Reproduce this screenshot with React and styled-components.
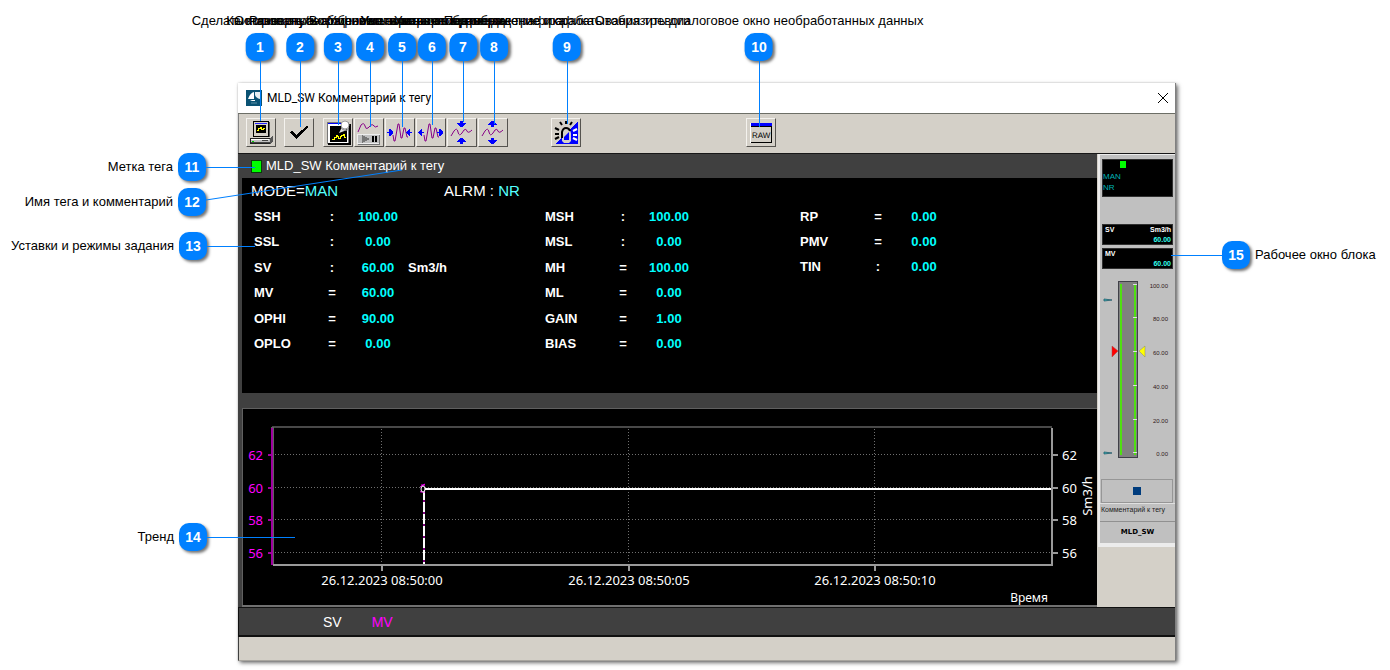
import React from 'react'
import styled, { createGlobalStyle, css } from 'styled-components'

const GlobalStyle = createGlobalStyle`
  *, *::before, *::after {
    box-sizing: border-box;
  }

  body {
    margin: 0;
    background: #fff;
    font-family: 'Liberation Sans', Arial, sans-serif;
  }
`

const Page = styled.main`
  position: relative;
  padding: 83px 214px 8px 238px;
  overflow: hidden;
`

/* ---------- window ---------- */

const Window = styled.section`
  background: #d4d0c8;
  border-right: 1px solid #808080;
  box-shadow: 2px 2px 4px rgba(0, 0, 0, 0.55), 0 0 2px rgba(0, 0, 0, 0.2);
`

const TitleBar = styled.header`
  display: flex;
  align-items: center;
  height: 31px;
  padding: 0 6px 0 8px;
  background: #fff;
  border-bottom: 1px solid #6c6e66;
`

const TitleText = styled.h1`
  flex: 1;
  margin: 0 0 0 5px;
  font: 12px/16px Roboto, 'Open Sans', sans-serif;
  color: #000;
`

const CloseButton = styled.button`
  display: flex;
  padding: 0;
  border: none;
  background: none;
`

const ToolBar = styled.div`
  display: flex;
  align-items: flex-start;
  height: 39px;
  padding: 4px 0 0 7px;
  border-left: 1px solid #808080;
`

const ToolGroup = styled.div`
  display: flex;
  gap: 1px;
  margin-right: ${({ $after }) => $after || 0}px;
`

const ToolButton = styled.button`
  width: 30px;
  height: 29px;
  padding: 0;
  background: #d4d0c8;
  border: 1px solid;
  border-color: #f4f2ee #55534f #55534f #f4f2ee;

  svg {
    display: block;
    margin: -1px;
  }
`

const Body = styled.div`
  display: flex;
  border-top: 1px solid #181818;
`

const Detail = styled.div`
  flex: 1;
  min-width: 0;
  padding-left: 4px;
  background: #404040;
`

const TagHeader = styled.div`
  display: flex;
  align-items: center;
  gap: 4px;
  height: 24px;
  padding-left: 9px;
  font-size: 13px;
  line-height: 20px;
  color: #fff;
`

const TagMark = styled.span`
  width: 11px;
  height: 13px;
  background: #0f0;
  border: 1px solid #0a3c0a;
`

const Params = styled.div`
  height: 215px;
  padding: 0 12px;
  background: #000;
  color: #fff;
`

const ModeRow = styled.div`
  display: flex;
  height: 26px;
  padding-left: 9px;
  margin-left: -12px;
  font-size: 15px;
  line-height: 25px;

  span {
    color: #55ffff;
  }
`

const ModeItem = styled.div`
  width: 193px;
  white-space: nowrap;
`

const ParamColumns = styled.div`
  display: flex;
  align-items: flex-start;
`

const ParamTable = styled.table`
  table-layout: fixed;
  width: ${({ $width }) => $width}px;
  height: ${({ $rows }) => ($rows > 3 ? 153 : 76)}px;
  border-collapse: collapse;
  font-size: 13px;
  line-height: 16px;
  font-weight: bold;

  th,
  td {
    padding: 0;
    text-align: center;
  }

  th {
    width: 62px;
    text-align: left;
  }
`

const Sign = styled.td`
  width: 32px;
`

const Value = styled.td`
  width: 60px;
  color: #0ff;
`

const Unit = styled.td`
  && {
    text-align: left;
  }
`

const Trend = styled.figure`
  margin: 15px 0 0;
  background: #000;

  svg {
    display: block;
    width: 100%;
    height: auto;
    font-family: 'Noto Sans', 'Open Sans', sans-serif;
    font-size: 13px;
  }
`

const Legend = styled.div`
  display: flex;
  gap: 30px;
  height: 30px;
  padding-left: 84px;
  background: #404040;
  border: solid #101010;
  border-width: 1px 0 2px 1px;
  font-size: 14px;
  line-height: 28px;
`

const LegendItem = styled.span`
  color: ${({ $color }) => $color};
`

const StatusBar = styled.footer`
  height: 24px;
  border-left: 1px solid #404040;
  border-bottom: 1px solid #a8a59f;
`

/* ---------- faceplate ---------- */

const Side = styled.aside`
  width: 78px;
  border-left: 1px solid #d4d0c8;
`

const Faceplate = styled.div`
  background: #c0c0c0;
  border: solid #ececec;
  border-width: 1px 0 4px 2px;
`

const black = css`
  margin: 0 2px;
  background: #000;
  border: 1px solid #303030;
`

const StateBox = styled.div`
  ${black}
  height: 38px;
  margin-bottom: 27px;
  font-size: 8px;
  line-height: 11px;
  color: #00b4b4;
`

const StateMark = styled.i`
  display: block;
  width: 6px;
  height: 7px;
  margin: 1px 0 3px 17px;
  background: #0f0;
`

const PlateTop = styled.div`
  padding-top: 4px;
`

const ReadOut = styled.div`
  ${black}
  height: 21px;
  margin-bottom: 3px;
  padding: 0 1px 0 2px;
  font-size: 7px;
  line-height: 10px;
  font-weight: bold;
  color: #fff;

  div {
    display: flex;
    justify-content: space-between;
  }

  output {
    display: block;
    text-align: right;
    color: #3fe;
  }
`

const Gauge = styled.svg`
  display: block;
  width: 74px;
  height: 196px;
  margin-top: 6px;
  font-size: 6px;
`

const PlateButton = styled.button`
  display: flex;
  align-items: center;
  justify-content: center;
  width: 72px;
  height: 24px;
  margin: 8px 0 0 1px;
  padding: 0;
  background: #c0c0c0;
  border: 1px solid #969696;
`

const PlateSquare = styled.i`
  width: 8px;
  height: 8px;
  background: #003c7d;
`

const PlateComment = styled.div`
  height: 19px;
  padding-left: 1px;
  border-top: 1px solid #e0e0e0;
  border-bottom: 1px solid #909090;
  font-size: 7px;
  line-height: 12px;
  color: #222;
  white-space: nowrap;
`

const PlateTag = styled.div`
  text-align: center;
  font: bold 7px/21px 'DejaVu Sans', sans-serif;
  color: #000;
`

/* ---------- callouts ---------- */

const Callout = styled.div`
  position: absolute;
  display: flex;
  align-items: center;
  gap: 5px;
  font-size: 13px;
  line-height: 16px;
  white-space: nowrap;
  color: #000;
  top: ${({ $y }) => $y}px;

  ${({ $side, $x }) =>
    $side === 'top' &&
    css`
      left: ${$x}px;
      flex-direction: column;
      gap: 4px;
      transform: translateX(-50%);
    `}

  ${({ $side, $x }) =>
    $side === 'left' &&
    css`
      left: 0;
      width: ${$x}px;
      justify-content: flex-end;
    `}

  ${({ $side }) =>
    $side === 'right' &&
    css`
      right: 0;
      width: 168px;
      flex-direction: row-reverse;
      justify-content: flex-end;
    `}
`

const Badge = styled.span`
  flex: none;
  width: 28px;
  height: 28px;
  border-radius: 10px;
  background: #0080ff;
  box-shadow: 2px 2px 3px rgba(0, 0, 0, 0.55);
  font-size: 14px;
  line-height: 28px;
  font-weight: bold;
  text-align: center;
  color: #fff;
`

const Leaders = styled.svg`
  position: absolute;
  inset: 0;
  width: 100%;
  height: 100%;
  pointer-events: none;
  stroke: #0080ff;
  stroke-width: 1;
`

/* ---------- data ---------- */

const topCallouts = [
  { n: 1, x: 260, end: 121, text: 'Сделать копию экрана' },
  { n: 2, x: 300, end: 127, text: 'Квитировать сообщение' },
  { n: 3, x: 338, end: 125, text: 'Развернуть график на экране' },
  { n: 4, x: 370, end: 127, text: 'Остановить/Возобновить построение тренда' },
  { n: 5, x: 402, end: 127, text: 'Уменьшить ось времени' },
  { n: 6, x: 432, end: 125, text: 'Увеличить ось времени' },
  { n: 7, x: 463, end: 122, text: 'Уменьшить отображение графика' },
  { n: 8, x: 494, end: 124, text: 'Увеличить отображение графика' },
  { n: 9, x: 567, end: 124, text: 'Подтверждение и срабатывания тревоги' },
  { n: 10, x: 759, end: 127, text: 'Отобразить диалоговое окно необработанных данных' }
]

const leftCallouts = [
  { n: 11, x: 206, y: 153, text: 'Метка тега' },
  { n: 12, x: 206, y: 188, text: 'Имя тега и комментарий' },
  { n: 13, x: 207, y: 232, text: 'Уставки и режимы задания' },
  { n: 14, x: 207, y: 523, text: 'Тренд' }
]

const paramGroups = [
  {
    width: 291,
    rows: [
      ['SSH', ':', '100.00'],
      ['SSL', ':', '0.00'],
      ['SV', ':', '60.00', 'Sm3/h'],
      ['MV', '=', '60.00'],
      ['OPHI', '=', '90.00'],
      ['OPLO', '=', '0.00']
    ]
  },
  {
    width: 255,
    rows: [
      ['MSH', ':', '100.00'],
      ['MSL', ':', '0.00'],
      ['MH', '=', '100.00'],
      ['ML', '=', '0.00'],
      ['GAIN', '=', '1.00'],
      ['BIAS', '=', '0.00']
    ]
  },
  {
    width: 200,
    rows: [
      ['RP', '=', '0.00'],
      ['PMV', '=', '0.00'],
      ['TIN', ':', '0.00']
    ]
  }
]

const trendLevels = [
  [62, 47],
  [60, 80],
  [58, 112],
  [56, 145]
]

const trendTimes = [
  ['26.12.2023 08:50:00', 140],
  ['26.12.2023 08:50:05', 387],
  ['26.12.2023 08:50:10', 633]
]

const gaugeMarks = [
  ['100.00', 10],
  ['80.00', 43],
  ['60.00', 77],
  ['40.00', 111],
  ['20.00', 145],
  ['0.00', 178]
]

/* ---------- icons ---------- */

const Icon = ({ children }) => (
  <svg width="30" height="29" viewBox="0 0 30 29" fill="none" shapeRendering="crispEdges" aria-hidden="true">
    {children}
  </svg>
)

const CopyIcon = () => (
  <Icon>
    <path d="M7.500 3.500h15v15h-15z" fill="#d4d0c8" stroke="#000" />
    <path d="M23 4h1v15h-1z" fill="#555" />
    <path d="M9 5h12" stroke="#22f" />
    <path d="M10 7h10v8H10z" fill="#000" />
    <path d="M11 12.500h1v-2h2v-1h1v2h2v-1h2" stroke="#ff0" />
    <path d="M4.500 20.500h20v5h-20z" fill="#c0c0c0" stroke="#222" />
    <path d="M24 20l3-2v6l-3 2z" fill="#555" />
    <path d="M5 21.500h18" stroke="#fff" />
    <path d="M5 24.500h19M16 22.500h6" stroke="#444" />
    <path d="M6 23h2" stroke="#0c0" />
  </Icon>
)

const CheckIcon = () => (
  <Icon>
    <path d="M6 14l2-1 4 4L23 8l1 1L12 21z" fill="#000" />
  </Icon>
)

const SaveTrendIcon = () => (
  <Icon>
    <path d="M4.500 4.500h21v21h-21z" fill="#fff" stroke="#777" />
    <path d="M5 26h22V6" stroke="#000" strokeWidth="2" />
    <path d="M5 5h14" stroke="#00f" />
    <path d="M7 8h17v16H7z" fill="#000" />
    <path d="M9 21.500h2v-2h2v-2h1v1h1v2h2v-2h1v-1h2v-1h1v3h2" stroke="#ff0" />
    <g shapeRendering="auto">
      <path d="M16 15l3-6 5 3z" fill="#ddd" />
      <circle cx="22" cy="7" r="4" fill="#fff" stroke="#999" />
      <path d="M18 10q4 4 8 1" stroke="#888" />
    </g>
  </Icon>
)

const PauseIcon = () => (
  <Icon>
    <g shapeRendering="auto">
      <path d="M4 14l3-7q3-3 4 1t3 2l3-3q2-1 3 1t4 0" stroke="#808" />
    </g>
    <path d="M3.500 16.500h22v9h-22z" fill="#c0c0c0" stroke="#eee" />
    <path d="M25.500 17v9H4" stroke="#777" />
    <path d="M8 17l8 4-8 4z" fill="#777" />
    <path d="M18 18h2v6h-2zM21 18h2v6h-2z" fill="#000" />
  </Icon>
)

const tallWave = 'M8 17l1 6h1l3-17h1l2 14h1l2-10h1l2 9h1'
const lowWave = 'M4 18l3-5q3-4 4 1t4 1l2-3q2-2 3 1t5-1'

const arrows = {
  right: 'M2 14h2v-3h1l3 3v1l-3 3h-1v-3h-2z',
  left: 'M8 14h-2v-3h-1l-3 3v1l3 3h1v-3h2z'
}

const NarrowIcon = () => (
  <Icon>
    <path d={tallWave} stroke="#808" shapeRendering="auto" />
    <path d={arrows.right} fill="#00f" />
    <path d={arrows.left} fill="#00f" transform="translate(19)" />
  </Icon>
)

const WidenIcon = () => (
  <Icon>
    <path d={tallWave} stroke="#808" shapeRendering="auto" />
    <path d={arrows.left} fill="#00f" />
    <path d={arrows.right} fill="#00f" transform="translate(19)" />
  </Icon>
)

const FlattenIcon = () => (
  <Icon>
    <path d={lowWave} stroke="#808" shapeRendering="auto" />
    <path d="M13 3h3v2h3v1l-4 3h-1l-4-3v-1h3zM13 26v-2h-3v-1l4-3h1l4 3v1h-3v2z" fill="#00f" />
  </Icon>
)

const HeightenIcon = () => (
  <Icon>
    <path d={lowWave} stroke="#808" shapeRendering="auto" />
    <path d="M13 9v-2h-3v-1l4-3h1l4 3v1h-3v2zM13 20h3v2h3v1l-4 3h-1l-4-3v-1h3z" fill="#00f" />
  </Icon>
)

const AlarmIcon = () => (
  <Icon>
    <path d="M27 3v23H4z" fill="#00f" />
    <g shapeRendering="auto">
      <path d="M11 23v-8q0-4 4-4t5 4v8l-2 2h-5z" fill="#d4d0c8" />
      <path d="M13 22v-3l5-5v8z" fill="#00f" />
      <path d="M11 20v-6q1-4 4-4t4 3" stroke="#000" strokeWidth="2" />
      <path d="M11 7L9 4M15 6V3M19 7l2-3M8 12l-4-2M8 16H4M8 19l-4 2" stroke="#000" strokeWidth="2" />
      <path d="M22 13l4-2M22 17h4M22 20l4 2" stroke="#fff" strokeWidth="2" />
    </g>
  </Icon>
)

const RawIcon = () => (
  <Icon>
    <path d="M4 5h22v20H4z" fill="#fff" />
    <path d="M5 9h20v15H5z" fill="#d4d0c8" />
    <path d="M5 5h21v3H5z" fill="#00f" />
    <path d="M5 8.500h20.500v16H5" stroke="#000" />
    <text x="6" y="20" fontSize="8" fill="#000" textRendering="geometricPrecision">
      RAW
    </text>
  </Icon>
)

const LogoIcon = () => (
  <svg width="16" height="16" viewBox="0 0 16 16" aria-hidden="true">
    <path d="M0 0h16v16H0z" fill="#0a5273" />
    <path d="M2 9q2-6 6-7v7z" fill="#fff" />
    <path d="M9 2h5v7q-4-1-5-4z" fill="#e4eef2" />
    <path d="M4 10h5v1H6z" fill="#fff" />
    <path d="M5 13h6" stroke="#5c90a6" />
  </svg>
)

const toolGroups = [
  { after: 8, tools: [['Копия экрана', CopyIcon]] },
  { after: 9, tools: [['Квитировать', CheckIcon]] },
  {
    after: 43,
    tools: [
      ['Окно тренда', SaveTrendIcon],
      ['Пауза', PauseIcon],
      ['Сократить ось времени', NarrowIcon],
      ['Увеличить ось времени', WidenIcon],
      ['Уменьшить график', FlattenIcon],
      ['Увеличить график', HeightenIcon]
    ]
  },
  { after: 165, tools: [['Тревога', AlarmIcon]] },
  { tools: [['Необработанные данные', RawIcon]] }
]

/* ---------- parts ---------- */

const ParamGroup = ({ width, rows }) => (
  <ParamTable $width={width} $rows={rows.length}>
    <tbody>
      {rows.map(([name, sign, value, unit]) => (
        <tr key={name}>
          <th scope="row">{name}</th>
          <Sign>{sign}</Sign>
          <Value>{value}</Value>
          <Unit>{unit}</Unit>
        </tr>
      ))}
    </tbody>
  </ParamTable>
)

const TrendChart = () => (
  <Trend>
    <svg viewBox="0 0 855 199">
      <g fill="none" shapeRendering="crispEdges">
        <path d="M0.500 198V0.500H855" stroke="#606060" />
        <path d="M0 198h855" stroke="#707070" strokeWidth="2" />
        <path d="M30 19h780" stroke="#484848" strokeWidth="2" />
        {trendLevels.map(([level, y]) => (
          <g key={level}>
            <path d={`M33 ${y - 0.5}h776`} stroke="#707070" strokeDasharray="1 2" />
            <path d={`M26 ${y}h5`} stroke="#a000a0" strokeWidth="2" />
            <path d={`M810 ${y}h6`} stroke="#999" strokeWidth="2" />
          </g>
        ))}
        {trendTimes.map(([time, x]) => (
          <g key={time}>
            <path d={`M${x - 0.5} 21v135`} stroke="#707070" strokeDasharray="1 2" />
            <path d={`M${x} 157v6`} stroke="#999" strokeWidth="2" />
          </g>
        ))}
        <path d="M30.500 19v138" stroke="#606060" strokeWidth="3" />
        <path d="M30 20v137" stroke="#a000a0" strokeWidth="2" />
        <path d="M31 157h780" stroke="#999" strokeWidth="2" />
        <path d="M810 20v138" stroke="#999" strokeWidth="2" />
        <path d="M182 83v73" stroke="#800080" strokeWidth="2" />
        <path d="M182 82v74" stroke="#fff" strokeWidth="2" strokeDasharray="10 2" />
        <path d="M182 81h627" stroke="#fff" strokeWidth="2" />
      </g>
      <path d="M178 79l5-3M178 84l5-2M180 76v9M182 76v9" stroke="#f0f" />
      <ellipse cx="181" cy="81" rx="2" ry="3" fill="#000" stroke="#fff" />
      {trendLevels.map(([level, y]) => (
        <g key={level}>
          <text x="21" y={y + 5} textAnchor="end" fill="#f0f">
            {level}
          </text>
          <text x="820" y={y + 5} fill="#fff">
            {level}
          </text>
        </g>
      ))}
      {trendTimes.map(([time, x]) => (
        <text key={time} x={x} y="177" textAnchor="middle" fill="#fff">
          {time}
        </text>
      ))}
      <text x="806" y="194" textAnchor="end" fontSize="12" fill="#fff">
        Время
      </text>
      <text transform="translate(850 88) rotate(-90)" textAnchor="middle" fill="#fff">
        Sm3/h
      </text>
    </svg>
  </Trend>
)

const GaugeScale = () => (
  <Gauge viewBox="0 0 74 196">
    <g shapeRendering="crispEdges">
      <path d="M18.500 6.500h19v176h-19z" fill="#808080" stroke="#404048" />
      <path d="M21 9v171M35 9v171" stroke="#4fe010" strokeWidth="2" />
      {gaugeMarks.map(([label, y]) => (
        <path key={label} d={`M33 ${y - 0.5}h4`} stroke="#e0e0e0" />
      ))}
    </g>
    <path d="M12 71l6 5-6 6z" fill="#f00" stroke="#a44" strokeWidth="0.5" />
    <path d="M45 71l-6 5 6 6z" fill="#ff0" stroke="#886" strokeWidth="0.5" />
    <path d="M4 24l8 1-8 1zM4 177l8 1-8 1z" fill="#3cc" stroke="#256" strokeWidth="0.8" />
    {gaugeMarks.map(([label, y]) => (
      <text key={label} x="68" y={y + 3} textAnchor="end" fill="#301818">
        {label}
      </text>
    ))}
  </Gauge>
)

const UnitFaceplate = () => (
  <Side>
    <Faceplate>
      <PlateTop>
        <StateBox>
          <StateMark />
          <div>MAN</div>
          <div>NR</div>
        </StateBox>
        <ReadOut>
          <div>
            <span>SV</span>
            <span>Sm3/h</span>
          </div>
          <output>60.00</output>
        </ReadOut>
        <ReadOut>
          <div>MV</div>
          <output>60.00</output>
        </ReadOut>
      </PlateTop>
      <GaugeScale />
      <PlateButton aria-label="Режим">
        <PlateSquare />
      </PlateButton>
      <PlateComment>Комментарий к тегу</PlateComment>
      <PlateTag>MLD_SW</PlateTag>
    </Faceplate>
  </Side>
)

const Callouts = () => (
  <>
    {topCallouts.map(({ n, x, text }) => (
      <Callout key={n} $side="top" $x={x} $y={13}>
        <span>{text}</span>
        <Badge>{n}</Badge>
      </Callout>
    ))}
    {leftCallouts.map(({ n, x, y, text }) => (
      <Callout key={n} $side="left" $x={x} $y={y}>
        <span>{text}</span>
        <Badge>{n}</Badge>
      </Callout>
    ))}
    <Callout $side="right" $y={241}>
      <span>Рабочее окно блока</span>
      <Badge>15</Badge>
    </Callout>
    <Leaders aria-hidden="true">
      {topCallouts.map(({ n, x, end }) => (
        <line key={n} x1={x + 0.5} y1="61" x2={x + 0.5} y2={end} />
      ))}
      <line x1="206" y1="167.500" x2="255" y2="167.500" />
      <line x1="206" y1="200" x2="402" y2="170" />
      <line x1="207" y1="246.500" x2="255" y2="246.500" />
      <line x1="207" y1="537.500" x2="295" y2="537.500" />
      <svg x="100%" overflow="visible">
        <line x1="-219" y1="255.500" x2="-168" y2="255.500" />
      </svg>
    </Leaders>
  </>
)

const App = () => (
  <Page>
    <GlobalStyle />
    <Window>
      <TitleBar>
        <LogoIcon />
        <TitleText>MLD_SW Комментарий к тегу</TitleText>
        <CloseButton aria-label="Закрыть">
          <svg width="12" height="12" viewBox="0 0 12 12" stroke="#000">
            <path d="M1 1l10 10M11 1L1 11" />
          </svg>
        </CloseButton>
      </TitleBar>
      <ToolBar>
        {toolGroups.map(({ after, tools }) => (
          <ToolGroup key={tools[0][0]} $after={after}>
            {tools.map(([label, ToolIcon]) => (
              <ToolButton key={label} aria-label={label}>
                <ToolIcon />
              </ToolButton>
            ))}
          </ToolGroup>
        ))}
      </ToolBar>
      <Body>
        <Detail>
          <TagHeader>
            <TagMark />
            MLD_SW Комментарий к тегу
          </TagHeader>
          <Params>
            <ModeRow>
              <ModeItem>
                MODE=<span>MAN</span>
              </ModeItem>
              <ModeItem>
                ALRM : <span>NR</span>
              </ModeItem>
            </ModeRow>
            <ParamColumns>
              {paramGroups.map(group => (
                <ParamGroup key={group.rows[0][0]} {...group} />
              ))}
            </ParamColumns>
          </Params>
          <TrendChart />
        </Detail>
        <UnitFaceplate />
      </Body>
      <Legend>
        <LegendItem $color="#fff">SV</LegendItem>
        <LegendItem $color="#f0f">MV</LegendItem>
      </Legend>
      <StatusBar />
    </Window>
    <Callouts />
  </Page>
)

export default App
